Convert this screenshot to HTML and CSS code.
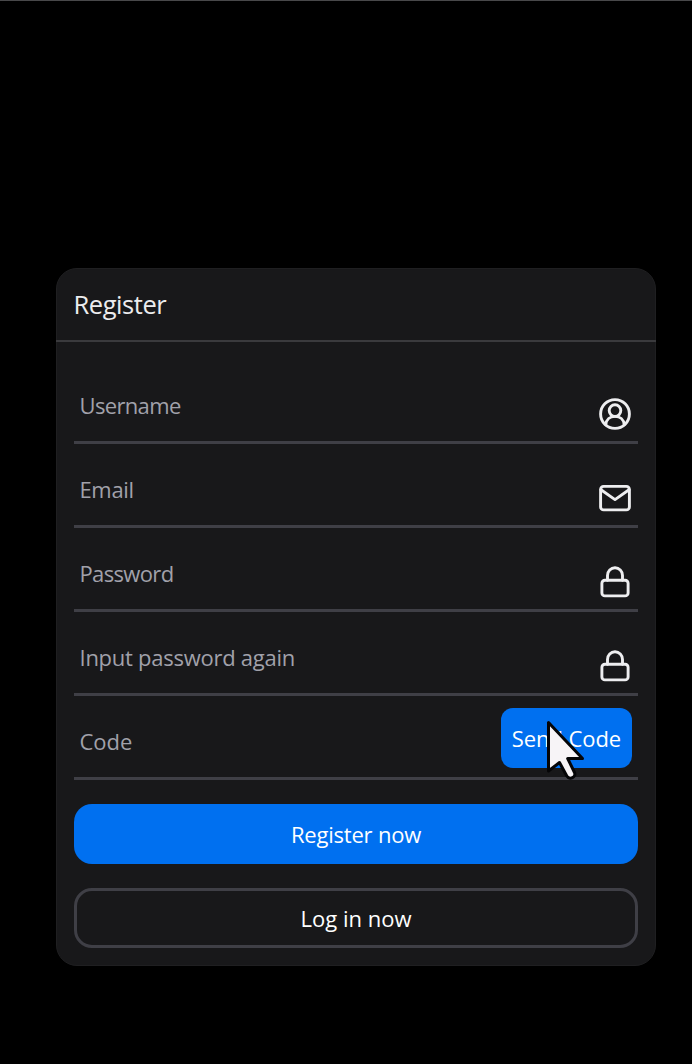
FILE: index.html
```html
<!DOCTYPE html>
<html lang="en">
<head>
<meta charset="utf-8">
<title>Register</title>
<link rel="stylesheet" href="styles.css">
</head>
<body>
<main class="page">
  <section class="card">
    <header class="card-header"><h1 class="title">Register</h1></header>
    <form class="form">
      <div class="field">
        <label class="label username">Username</label>
        <svg class="icon" viewBox="0 0 34 34"><circle cx="17" cy="17" r="14.400"/><circle cx="17" cy="13.600" r="5.800"/><path d="M7.800 27.800c.400-5.200 4.300-8.400 9.200-8.400s8.800 3.200 9.200 8.400"/></svg>
      </div>
      <div class="field">
        <label class="label email">Email</label>
        <svg class="icon" viewBox="0 0 34 34"><rect x="2.600" y="5.400" width="28.800" height="23.500" rx="3"/><path d="M3 8.800l14 9.800L31 8.800"/></svg>
      </div>
      <div class="field">
        <label class="label password">Password</label>
        <svg class="icon" viewBox="0 0 34 34"><rect x="3.900" y="15.200" width="26.200" height="15.700" rx="3"/><path d="M9.500 15.200V10.500a7.500 7.700 0 0 1 15 0v4.700"/></svg>
      </div>
      <div class="field">
        <label class="label again">Input password again</label>
        <svg class="icon" viewBox="0 0 34 34"><rect x="3.900" y="15.200" width="26.200" height="15.700" rx="3"/><path d="M9.500 15.200V10.500a7.500 7.700 0 0 1 15 0v4.700"/></svg>
      </div>
      <div class="field">
        <label class="label code">Code</label>
        <button class="send" type="button">Send Code
          <svg class="cursor" viewBox="0 0 40 62"><path d="M2.500 3.500v48.500l11-8.500 7.300 13.500c2.800 4.500 9.700 1.200 7.700-3.500L21.700 39.500H36.500z"/></svg>
        </button>
      </div>
      <button class="button primary" type="button">Register now</button>
      <button class="button outline" type="button">Log in now</button>
    </form>
  </section>
</main>
</body>
</html>
```
FILE: styles.css
```css
* { box-sizing: border-box; }
body { margin: 0; background: #000; color: #fff; font-family: "Open Sans", "Noto Sans", sans-serif; }
.page { height: 1064px; border-top: 1px solid #48484a; padding: 267px 36px 0 56px; overflow: hidden; }
.card { height: 698px; border-radius: 21px; background: #18181a; border: 1px solid #1f1f21; }
.card-header { height: 73px; margin: 0 -1px; padding: 0 18px 2px; border-bottom: 2px solid #3a3a3d; display: flex; align-items: center; }
.title { margin: 0 0 0 -.500px; font-size: 25.500px; line-height: 36px; font-weight: 470; letter-spacing: -.450px; color: #ececee; }
.form { display: flex; flex-direction: column; padding: 30px 17px 0; }
.field { height: 72px; margin-bottom: 12px; border-bottom: 3px solid #3f3f46; padding: 0 6px; display: flex; justify-content: space-between; align-items: flex-start; }
.field:last-of-type { margin-bottom: 24px; }
.label { margin: 17px 0 0 -.500px; font-size: 22px; line-height: 32px; font-weight: 450; color: #a1a1aa; white-space: nowrap; }
.username, .password { letter-spacing: -.650px; }
.email { letter-spacing: -.350px; }
.again { letter-spacing: -.260px; }
.code { letter-spacing: 0; }
.icon { width: 34px; height: 34px; margin: 25px 0 0; fill: none; stroke: #eeeef0; stroke-width: 2.900; stroke-linecap: round; stroke-linejoin: round; }
.send, .button { border: 0; padding: 0 0 1px; font: 440 22px/32px "Open Sans", "Noto Sans", sans-serif; color: #fff; }
.send { position: relative; width: 131px; height: 60px; border-radius: 12px; background: #0070f0; letter-spacing: -.080px; white-space: nowrap; }
.cursor { position: absolute; left: 45px; top: 11px; width: 40px; height: 62px; fill: #f7f4f7; stroke: #050507; stroke-width: 3; stroke-linejoin: round; z-index: 1; }
.button { height: 60px; border-radius: 18px; letter-spacing: -.200px; }
.primary { background: #0070f0; margin-bottom: 24px; }
.outline { background: transparent; border: 3px solid #3f3f46; letter-spacing: 0; }
```
